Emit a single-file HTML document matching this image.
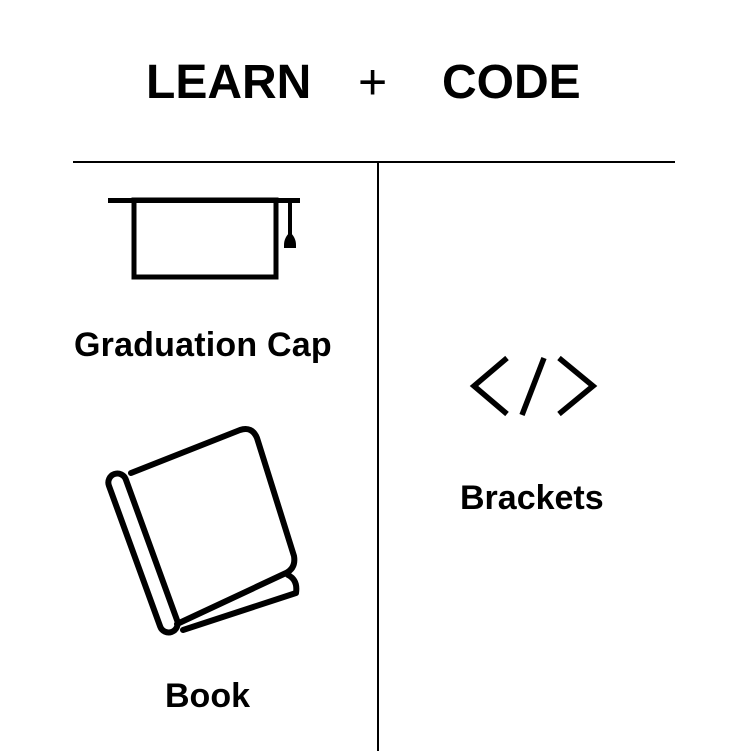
<!DOCTYPE html>
<html><head><style>
body{margin:0;width:751px;height:751px;background:#fff;position:relative;overflow:hidden;font-family:"Liberation Sans",sans-serif;font-weight:bold;color:#000}
.t{position:absolute;white-space:nowrap;line-height:1}
</style></head><body>
<div class="t" style="left:146px;top:59px;font-size:48px">LEARN</div>
<div class="t" style="left:358px;top:57px;font-size:50px;font-weight:normal">+</div>
<div class="t" style="left:442px;top:59px;font-size:48px">CODE</div>
<div style="position:absolute;left:73px;top:161px;width:602px;height:2px;background:#000"></div>
<div style="position:absolute;left:377px;top:162px;width:2px;height:589px;background:#000"></div>
<div class="t" style="left:74px;top:328px;font-size:34px;letter-spacing:0.2px">Graduation Cap</div>
<div class="t" style="left:460px;top:481px;font-size:34px">Brackets</div>
<div class="t" style="left:165px;top:679px;font-size:34px">Book</div>
<svg width="751" height="751" style="position:absolute;left:0;top:0" fill="none" stroke="#000">
<line x1="108" y1="200.5" x2="300" y2="200.5" stroke-width="5"/>
<rect x="134" y="200" width="142" height="77" stroke-width="5"/>
<line x1="290" y1="200" x2="290" y2="236" stroke-width="4"/>
<path d="M290 232 C286 236 284 240 284 245 L284 248 L296 248 L296 245 C296 240 294 236 290 232Z" fill="#000" stroke="none"/>
<g stroke-width="6" stroke-linejoin="round" stroke-linecap="round">
<rect x="-9" y="-84" width="18" height="168" rx="9" transform="translate(143 553) rotate(-20)"/>
<path d="M131 473 L240 430 Q252 426 257 438 L294 556 Q296 568 286 573 L177 624"/>
<path d="M288 575 Q298 580 296 593 L183 630"/>
</g>
<g stroke-width="5.5">
<polyline points="507,358 474,386 507,414"/>
<line x1="544" y1="358" x2="522" y2="415"/>
<polyline points="559,358 593,386 559,414"/>
</g>
</svg>
</body></html>
